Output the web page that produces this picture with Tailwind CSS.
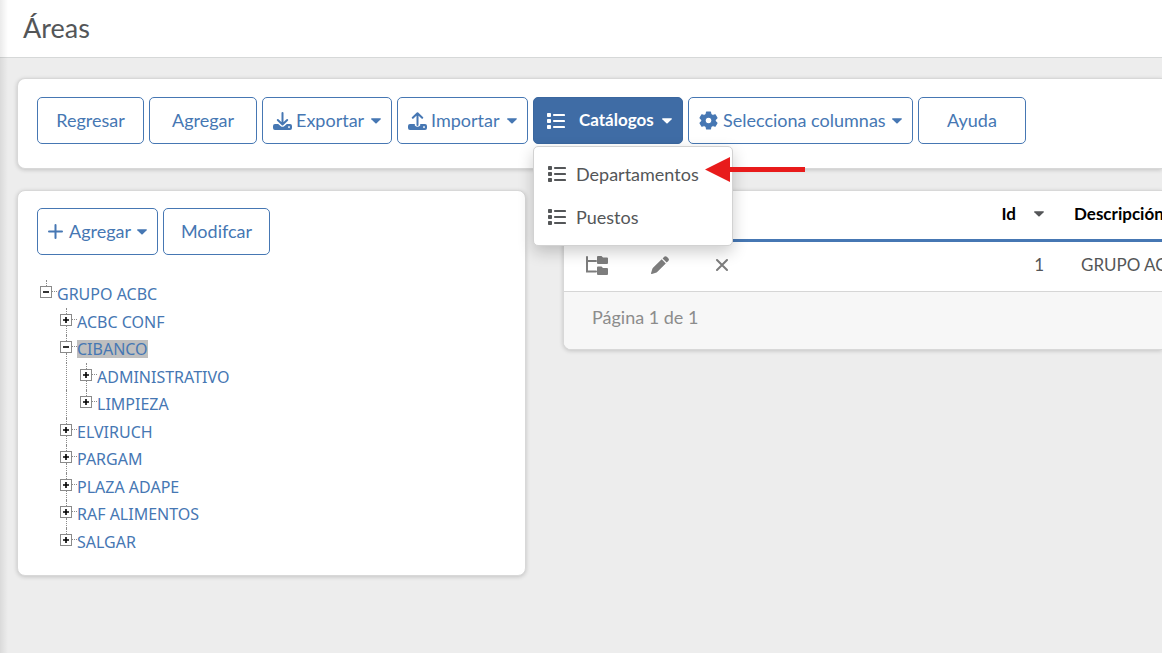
<!DOCTYPE html>
<html lang="es">
<head>
<meta charset="utf-8">
<meta name="viewport" content="width=device-width, initial-scale=1">
<title>Áreas</title>
<script src="https://cdn.jsdelivr.net/npm/@tailwindcss/browser@4"></script>
</head>
<body class="relative min-h-screen overflow-x-hidden bg-[#ededed] font-[Lato,'Open_Sans',sans-serif] text-lg text-[#545658]">
<svg class="hidden" aria-hidden="true">
  <symbol id="list" viewBox="0 0 18 16">
    <path fill="currentColor" d="M.8 0h2.400q.8 0 .8.800v2.400q0 .8-.8.800H.8Q0 4 0 3.200V.8Q0 0 .8 0zM.8 6h2.400q.8 0 .8.800v2.400q0 .8-.8.800H.8Q0 10 0 9.200V6.800Q0 6 .8 6zM.8 12h2.400q.8 0 .8.800v2.400q0 .8-.8.800H.8Q0 16 0 15.200v-2.400Q0 12 .8 12z"/>
    <path stroke="currentColor" stroke-width="2.200" stroke-linecap="round" d="M7 2h10M7 8h10M7 14h10"/>
  </symbol>
  <symbol id="caret" viewBox="0 0 10 6"><path fill="currentColor" d="M.6.300h8.800q.8.200.3.900L5.600 5.200q-.6.500-1.200 0L.3 1.200Q-.2.500.6.300z"/></symbol>
</svg>

<header class="flex h-[58px] items-center border-b border-[#d6d8d8] bg-white px-[23px] pb-0.5">
  <h1 class="text-[27px] leading-9">Áreas</h1>
</header>

<main class="flex flex-col gap-[21px] pt-5 pl-[17px]">
  <section class="rounded-l-lg border border-r-0 border-[#d8d8d8] bg-white px-[19px] pt-[18px] pb-6 shadow-[0_1px_4px_rgba(0,0,0,0.18)]">
    <div class="flex gap-[5px]">
      <button class="h-[47px] w-[107px] rounded-[5px] border border-[#4677b3] pb-0.5 text-[#4677b3]">Regresar</button>
      <button class="h-[47px] w-[108px] rounded-[5px] border border-[#4677b3] pb-0.5 text-[#4677b3]">Agregar</button>
      <button class="flex h-[47px] w-[130px] items-center rounded-[5px] border border-[#4677b3] px-[10px] text-[#4677b3]">
        <svg class="h-[18px] w-[19px]" viewBox="0 0 19 18" aria-hidden="true"><path fill="none" stroke="currentColor" stroke-width="2" stroke-linecap="round" stroke-linejoin="round" d="M9.500 1v11M4.800 8l4.700 4.500L14.200 8"/><path fill="currentColor" fill-rule="evenodd" d="M2 12h3.200l2.600 2.200q1.700 1.200 3.400 0L13.800 12H17q2 0 2 2v2q0 2-2 2H2q-2 0-2-2v-2q0-2 2-2zm14 2.200a.9.900 0 1 0 .01 0z"/></svg>
        <span class="ml-1 pb-0.5">Exportar</span>
        <svg class="ml-auto h-1.5 w-2.5" aria-hidden="true"><use href="#caret"/></svg>
      </button>
      <button class="flex h-[47px] w-[131px] items-center rounded-[5px] border border-[#4677b3] px-[10px] text-[#4677b3]">
        <svg class="h-[18px] w-[19px]" viewBox="0 0 19 18" aria-hidden="true"><path fill="none" stroke="currentColor" stroke-width="2" stroke-linecap="round" stroke-linejoin="round" d="M9.500 13V1.500M4.800 5.800l4.700-4.500 4.700 4.500"/><path fill="currentColor" fill-rule="evenodd" d="M2 12h4.800v1.500q2.700 2.500 5.400 0V12H17q2 0 2 2v2q0 2-2 2H2q-2 0-2-2v-2q0-2 2-2zm14 2.200a.9.900 0 1 0 .01 0z"/></svg>
        <span class="ml-1 pb-0.5">Importar</span>
        <svg class="ml-auto h-1.5 w-2.5" aria-hidden="true"><use href="#caret"/></svg>
      </button>
      <div class="relative">
        <button aria-haspopup="menu" aria-expanded="true" class="flex h-[47px] w-[150px] items-center rounded-[5px] border border-[#3a679f] bg-[#3f6ca5] pr-[10px] pl-[13px] text-[17px] font-bold text-white">
          <svg class="h-4 w-[18px]" aria-hidden="true"><use href="#list"/></svg>
          <span class="ml-[14px]">Catálogos</span>
          <svg class="ml-auto h-1.5 w-2.5" aria-hidden="true"><use href="#caret"/></svg>
        </button>
        <div role="menu" class="absolute top-[49px] left-0 z-20 w-[200px] rounded-[5px] border border-[#d2d2d2] bg-white pt-[5px] pb-[7px] shadow-[0_6px_16px_rgba(0,0,0,0.2)]">
          <a role="menuitem" href="#departamentos" class="flex h-[43px] items-center gap-[10px] px-[14px]"><svg class="h-4 w-[18px]" aria-hidden="true"><use href="#list"/></svg>Departamentos</a>
          <a role="menuitem" href="#puestos" class="flex h-[43px] items-center gap-[10px] px-[14px]"><svg class="h-4 w-[18px]" aria-hidden="true"><use href="#list"/></svg>Puestos</a>
        </div>
        <svg class="absolute top-[60px] left-[172px] z-30 h-[26px] w-[100px]" viewBox="0 0 100 26" aria-hidden="true"><path fill="#e81b1b" d="M0 12.500 25 0v10h75v5H25v10z"/></svg>
      </div>
      <button class="flex h-[47px] w-[225px] items-center rounded-[5px] border border-[#4677b3] px-[10px] text-[#4677b3]">
        <svg class="size-[19px]" viewBox="0 0 20 20" aria-hidden="true"><path fill="currentColor" stroke="currentColor" stroke-width="1.200" stroke-linejoin="round" fill-rule="evenodd" d="M8 1h4l.6 2.700 1.800 1 2.600-.8 2 3.400-2 1.900v1.600l2 1.900-2 3.400-2.600-.8-1.800 1L12 19H8l-.6-2.700-1.800-1-2.600.8-2-3.400 2-1.900V9.200L1 7.300l2-3.400 2.600.8 1.800-1zm2 5.400a3.600 3.600 0 1 0 .01 0z"/></svg>
        <span class="ml-[5px] pb-0.5 whitespace-nowrap">Selecciona columnas</span>
        <svg class="ml-auto h-1.5 w-2.5" aria-hidden="true"><use href="#caret"/></svg>
      </button>
      <button class="h-[47px] w-[108px] rounded-[5px] border border-[#4677b3] pb-0.5 text-[#4677b3]">Ayuda</button>
    </div>
  </section>

  <div class="flex items-start gap-[37px]">
    <section class="w-[509px] shrink-0 rounded-lg border border-[#d8d8d8] bg-white px-[19px] pt-[17px] pb-5 shadow-[0_1px_4px_rgba(0,0,0,0.18)]">
      <div class="flex gap-[5px]">
        <button class="flex h-[47px] w-[121px] items-center rounded-[5px] border border-[#4677b3] px-[10px] text-[#4677b3]">
          <svg class="size-[15px]" viewBox="0 0 15 15" aria-hidden="true"><path stroke="currentColor" stroke-width="2" stroke-linecap="round" d="M7.500 1v13M1 7.500h13"/></svg>
          <span class="ml-1.5 pb-0.5">Agregar</span>
          <svg class="ml-auto h-1.5 w-2.5" aria-hidden="true"><use href="#caret"/></svg>
        </button>
        <button class="h-[47px] w-[107px] rounded-[5px] border border-[#4677b3] pb-0.5 text-[#4677b3]">Modifcar</button>
      </div>
      <ul id="tree" role="tree" class="mt-[25px] grid h-[275px] grid-rows-10 font-['Noto_Sans',sans-serif] text-base leading-7 text-[#4677b3]"></ul>
    </section>

    <section class="min-w-0 flex-1 overflow-hidden rounded-l-lg border border-r-0 border-[#d8d8d8] bg-white shadow-[0_1px_4px_rgba(0,0,0,0.18)]">
      <table class="w-full table-fixed border-collapse whitespace-nowrap">
        <colgroup><col class="w-[65px]"><col class="w-[62px]"><col class="w-[62px]"><col class="w-[303px]"><col></colgroup>
        <thead>
          <tr class="h-[49px] border-b-3 border-[#4677b3] text-[17px] text-black">
            <td></td><td></td><td></td>
            <th scope="col" class="pr-3 pb-0.5"><div class="flex items-center justify-end gap-[18px]">Id<svg class="h-1.5 w-2.5 text-[#545658]" aria-hidden="true"><use href="#caret"/></svg></div></th>
            <th scope="col" class="pb-0.5 pl-[18px] text-left">Descripción</th>
          </tr>
        </thead>
        <tbody>
          <tr class="h-[51px] border-b border-[#d6d6d6] text-[17px]">
            <td class="pb-0.5"><button aria-label="Estructura" class="mx-auto block text-[#7d7d7d]"><svg class="h-[19px] w-[22px]" viewBox="0 0 22 19" aria-hidden="true"><path fill="none" stroke="currentColor" stroke-width="2" stroke-linecap="round" d="M1 1v14.500h9M1 5h9"/><path fill="currentColor" d="M12 0h3.500l1.500 1.500h4q1 0 1 1V7q0 1-1 1h-9q-1 0-1-1V1q0-1 1-1zM12 10.500h3.500L17 12h4q1 0 1 1v5q0 1-1 1h-9q-1 0-1-1v-6.500q0-1 1-1z"/></svg></button></td>
            <td class="pb-0.5"><button aria-label="Editar" class="mx-auto block text-[#7d7d7d]"><svg class="size-[18px]" viewBox="0 0 18 18" aria-hidden="true"><path fill="currentColor" d="M13.200.8q1.300-1.300 2.600 0l1.500 1.500q1.300 1.300 0 2.600L15.700 6.500 11.600 2.400zM10.700 3.300l4.100 4.100-8.600 8.600q-.6.600-1.400.8L.9 17.900q-1 .2-.8-.8l1.100-3.900q.2-.8.800-1.400z"/></svg></button></td>
            <td class="pb-0.5"><button aria-label="Eliminar" class="mx-auto block text-[#7d7d7d]"><svg class="size-3" viewBox="0 0 12 12" aria-hidden="true"><path stroke="currentColor" stroke-width="2" stroke-linecap="round" d="m1 1 10 10M11 1 1 11"/></svg></button></td>
            <td class="pr-3 pb-0.5 text-right">1</td>
            <td class="pb-0.5 pl-[25px]">GRUPO ACBC</td>
          </tr>
        </tbody>
      </table>
      <footer class="flex h-[57px] items-center bg-[#f7f7f7] px-7 pb-1.5 text-[#8c8c8c]">Página 1 de 1</footer>
    </section>
  </div>
</main>
<div class="pointer-events-none absolute inset-y-0 left-0 w-2 bg-linear-to-r from-black/8 to-transparent"></div>

<script>
// level, label, expanded, draws the line below, selected
const nodes = [
  [0, 'GRUPO ACBC', true, false, false],
  [1, 'ACBC CONF', false, true, false],
  [1, 'CIBANCO', true, true, true],
  [2, 'ADMINISTRATIVO', false, true, false],
  [2, 'LIMPIEZA', false, false, false],
  [1, 'ELVIRUCH', false, true, false],
  [1, 'PARGAM', false, true, false],
  [1, 'PLAZA ADAPE', false, true, false],
  [1, 'RAF ALIMENTOS', false, true, false],
  [1, 'SALGAR', false, false, false],
];
document.getElementById('tree').innerHTML = nodes.map(([level, label, open, below, selected]) => {
  let cells = '';
  if (level > 0) cells += '<span class="w-5"></span>';
  if (level > 1) cells += '<span class="w-5 pl-[9px]"><span class="block h-full border-l border-dotted border-[#8a8a8a]"></span></span>';
  return `<li role="treeitem" aria-level="${level + 1}" aria-expanded="${open}" aria-selected="${selected}" class="flex min-h-0">${cells}
    <span class="flex w-5 pl-[3px]">
      <span class="flex w-3 flex-col items-center">
        <span class="h-[6px] border-l border-dotted border-[#8a8a8a]"></span>
        <button aria-label="${open ? 'Contraer' : 'Expandir'} ${label}" class="flex size-3 shrink-0 items-center justify-center border border-[#8a8a8a] bg-white text-black"><svg class="size-2" viewBox="0 0 8 8" aria-hidden="true"><path stroke="currentColor" stroke-width="1.600" d="${open ? 'M1 4h6' : 'M1 4h6M4 1v6'}"/></svg></button>
        ${below ? '<span class="flex-1 border-l border-dotted border-[#8a8a8a]"></span>' : ''}
      </span>
      <span class="mt-[11px] h-px w-[5px] border-t border-dotted border-[#8a8a8a]"></span>
    </span>
    <a href="#nodo" class="self-start"><span class="${selected ? 'inline-block bg-[#bfbfbf] leading-[18px]' : ''}">${label}</span></a>
  </li>`;
}).join('');
</script>
</body>
</html>
